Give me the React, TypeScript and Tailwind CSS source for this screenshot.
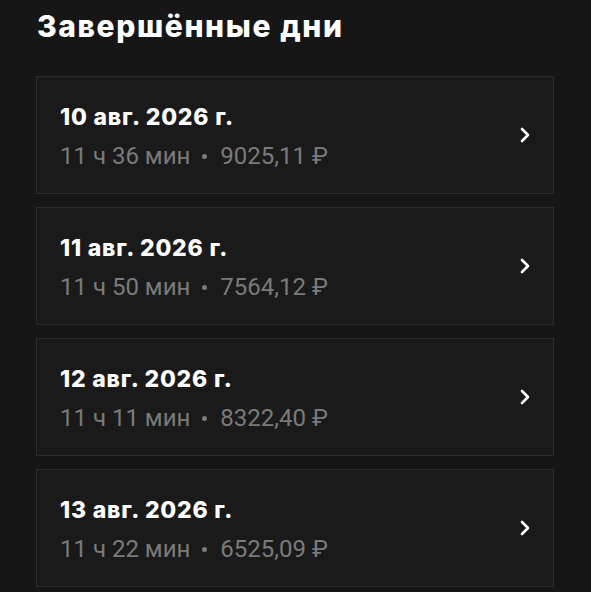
import React from "react";

const days = [
  { date: "10 авг. 2026 г.", time: "11 ч 36 мин", sum: "9025,11 ₽" },
  { date: "11 авг. 2026 г.", time: "11 ч 50 мин", sum: "7564,12 ₽" },
  { date: "12 авг. 2026 г.", time: "11 ч 11 мин", sum: "8322,40 ₽" },
  { date: "13 авг. 2026 г.", time: "11 ч 22 мин", sum: "6525,09 ₽" },
];

export default function App() {
  return (
    <div className="min-h-[592px] w-[591px] bg-[#161616] overflow-hidden">
      <div className="pl-[37px] pr-[37px] pt-[8px]">
        <h1 className="text-[30px] leading-[36px] font-extrabold text-white tracking-[1.6px]" style={{ fontFamily: "Inter, 'Noto Sans', sans-serif" }}>
          Завершённые дни
        </h1>
        <div className="mt-[32px] flex flex-col gap-[13px] -ml-px w-[518px]">
          {days.map((d) => (
            <div key={d.date} className="h-[118px] border border-[#2c2c2c] bg-[#1a1a1a] flex items-center justify-between pl-[23px] pr-[22px]">
              <div className="flex flex-col pt-[3px]">
                <div className="text-[23px] leading-[28px] font-extrabold text-white tracking-[0.8px]" style={{ fontFamily: "Inter, 'Noto Sans', sans-serif" }}>
                  {d.date}
                </div>
                <div className="mt-[11px] text-[24px] leading-[28px] text-[#7a7a7a] flex items-center" style={{ fontFamily: "Roboto, sans-serif" }}>
                  <span>{d.time}</span>
                  <span className="ml-[12px] mr-[13px] w-[5px] h-[5px] rounded-full bg-[#7a7a7a]" />
                  <span>{d.sum}</span>
                </div>
              </div>
              <svg width="12" height="16" viewBox="0 0 12 16" fill="none">
                <path d="M3 2 L9 8 L3 14" stroke="white" strokeWidth="2.6" strokeLinecap="round" strokeLinejoin="round" />
              </svg>
            </div>
          ))}
        </div>
      </div>
    </div>
  );
}
